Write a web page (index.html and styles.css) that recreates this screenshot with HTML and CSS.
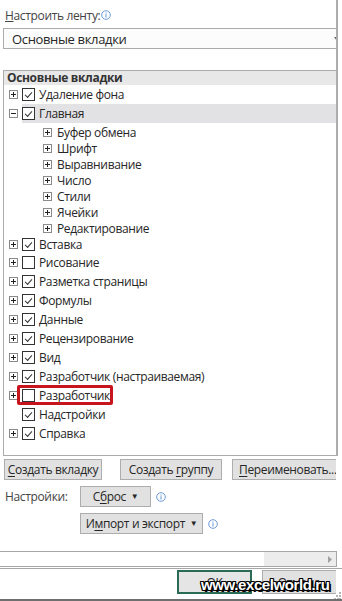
FILE: index.html
```html
<!DOCTYPE html>
<html lang="ru">
<head>
  <meta charset="UTF-8" />
  <meta name="viewport" content="width=device-width, initial-scale=1.0"/>
  <title>Настроить ленту</title>
  <link rel="stylesheet" href="styles.css">
</head>
<body>

  <div class="dlg">
    <div class="top">
      <div class="caption"><span><u>Н</u>астроить ленту:</span>
        <svg class="info" width="10" height="10" viewBox="0 0 10 10"><circle cx="5" cy="5" r="4.3" fill="none" stroke="#5b8fd1" stroke-width="0.9"/><rect x="4.5" y="4.2" width="1" height="3.3" fill="#5b8fd1"/><rect x="4.5" y="2.5" width="1" height="1" fill="#5b8fd1"/></svg>
      </div>
      <div class="combo">
        <span>Основные вкладки</span>
        <svg class="combo-arrow" width="6" height="4" viewBox="0 0 6 4"><path d="M0 0h6L3 4z" fill="#666"/></svg>
      </div>

      <div class="tree">
        <div class="tree-head">Основные вкладки</div>

        <div class="row"><i class="tog plus"></i><i class="chk on"></i><span>Удаление фона</span></div>
        <div class="row"><i class="tog minus"></i><span class="sel"><i class="chk on"></i><span>Главная</span></span></div>
        <div class="sub">
          <div class="row small"><i class="tog plus"></i><span>Буфер обмена</span></div>
          <div class="row small"><i class="tog plus"></i><span>Шрифт</span></div>
          <div class="row small"><i class="tog plus"></i><span>Выравнивание</span></div>
          <div class="row small"><i class="tog plus"></i><span>Число</span></div>
          <div class="row small"><i class="tog plus"></i><span>Стили</span></div>
          <div class="row small"><i class="tog plus"></i><span>Ячейки</span></div>
          <div class="row small"><i class="tog plus"></i><span>Редактирование</span></div>
        </div>
        <div class="row short"><i class="tog plus"></i><i class="chk on"></i><span>Вставка</span></div>
        <div class="row"><i class="tog plus"></i><i class="chk"></i><span>Рисование</span></div>
        <div class="row"><i class="tog plus"></i><i class="chk on"></i><span>Разметка страницы</span></div>
        <div class="row"><i class="tog plus"></i><i class="chk on"></i><span>Формулы</span></div>
        <div class="row"><i class="tog plus"></i><i class="chk on"></i><span>Данные</span></div>
        <div class="row"><i class="tog plus"></i><i class="chk on"></i><span>Рецензирование</span></div>
        <div class="row"><i class="tog plus"></i><i class="chk on"></i><span>Вид</span></div>
        <div class="row"><i class="tog plus"></i><i class="chk on"></i><span>Разработчик (настраиваемая)</span></div>
        <div class="row marked"><i class="tog plus"></i><i class="chk"></i><span>Разработчик</span><b class="mark"></b></div>
        <div class="row"><i class="tog"></i><i class="chk on"></i><span>Надстройки</span></div>
        <div class="row"><i class="tog plus"></i><i class="chk on"></i><span>Справка</span></div>
      </div>
    </div>

    <div class="actions">
      <div class="btn-row">
        <button class="btn b-tab"><u>С</u>оздать вкладку</button>
        <button class="btn b-group">Создать <u>г</u>руппу</button>
        <button class="btn b-ren"><u>П</u>ереименовать...</button>
      </div>
      <div class="opt-row">
        <span class="opt-label">Настройки:</span>
        <button class="btn b-reset">С<u>б</u>рос <span class="tri">▼</span></button>
        <svg class="info" width="10" height="10" viewBox="0 0 10 10"><circle cx="5" cy="5" r="4.3" fill="none" stroke="#5b8fd1" stroke-width="0.9"/><rect x="4.5" y="4.2" width="1" height="3.3" fill="#5b8fd1"/><rect x="4.5" y="2.5" width="1" height="1" fill="#5b8fd1"/></svg>
      </div>
      <div class="opt-row">
        <span class="opt-label"></span>
        <button class="btn b-import">И<u>м</u>порт и экспорт <span class="tri">▼</span></button>
        <svg class="info" width="10" height="10" viewBox="0 0 10 10"><circle cx="5" cy="5" r="4.3" fill="none" stroke="#5b8fd1" stroke-width="0.9"/><rect x="4.5" y="4.2" width="1" height="3.3" fill="#5b8fd1"/><rect x="4.5" y="2.5" width="1" height="1" fill="#5b8fd1"/></svg>
      </div>
    </div>

    <div class="hscroll">
      <div class="thumb"></div>
      <div class="track"></div>
      <div class="arrow"><svg width="4" height="7" viewBox="0 0 4 7"><path d="M0 0l4 3.5L0 7z" fill="#a0a0a0"/></svg></div>
    </div>

    <div class="footer">
      <button class="btn b-ok">ОК</button>
      <div class="cancel-clip"><button class="btn b-cancel">Отмена</button></div>
      <svg class="grip" width="7" height="8" viewBox="0 0 7 8"><g fill="#b5b5b5"><rect x="5" y="0" width="2" height="2"/><rect x="2" y="3" width="2" height="2"/><rect x="5" y="3" width="2" height="2"/><rect x="0" y="6" width="2" height="2"/><rect x="3" y="6" width="2" height="2"/><rect x="5" y="6" width="2" height="2"/></g></svg>
    </div>

    <div class="watermark">www.excelworld.ru</div>
  </div>

</body>
</html>
```

FILE: styles.css
```css
body {
  margin: 0;
  background: #fff;
  font-family: "Open Sans", "Noto Sans", sans-serif;
  font-size: 12px;
  letter-spacing: -0.35px;
  color: #262626;
}

.dlg {
  position: relative;
  width: 342px;
  height: 599px;
  border-bottom: 2px solid #6f6f6f;
  overflow: hidden;
}

.top {
  width: 336px;
  border-right: 2px solid #acacac;
  overflow: hidden;
}

.caption {
  display: flex;
  align-items: center;
  height: 28px;
  padding-left: 5px;
  color: #444;
  box-sizing: border-box;
  padding-top: 2px;
}

.caption u {
  text-decoration-thickness: 1px;
}

.info {
  display: block;
  margin-left: 1px;
  flex: none;
}

.combo {
  display: flex;
  align-items: center;
  justify-content: space-between;
  margin-left: 3px;
  width: 340px;
  height: 21px;
  box-sizing: border-box;
  border: 1px solid #ababab;
  background: #fcfcfc;
  padding: 0 0 0 8px;
  font-size: 13px;
}

.combo-arrow {
  margin-right: 2px;
}

.tree {
  margin: 21px 0 0 3px;
  height: 384px;
  border: 1px solid #ababab;
  border-right: none;
}

.tree-head {
  height: 14px;
  line-height: 14px;
  background: #e8e8e8;
  padding-left: 3px;
  font-weight: 700;
  color: #333;
}

.row {
  position: relative;
  display: flex;
  align-items: center;
  height: 19px;
  padding-left: 5px;
  white-space: nowrap;
}

.row.short {
  height: 17px;
}

.sub .row {
  height: 16px;
  padding-left: 39px;
}

.sub {
  padding-top: 1px;
}

.tog {
  display: block;
  flex: none;
  width: 9px;
  height: 9px;
  margin-right: 4px;
  box-sizing: border-box;
  position: relative;
}

.tog.plus,
.tog.minus {
  border: 1px solid #8a8a8a;
  background: #fff;
}

.tog.plus::before,
.tog.minus::before {
  content: "";
  position: absolute;
  left: 1px;
  top: 3px;
  width: 5px;
  height: 1px;
  background: #222;
}

.tog.plus::after {
  content: "";
  position: absolute;
  left: 3px;
  top: 1px;
  width: 1px;
  height: 5px;
  background: #222;
}

.sub .tog {
  margin-right: 5px;
}

.chk {
  display: block;
  flex: none;
  width: 13px;
  height: 13px;
  margin-right: 4px;
  box-sizing: border-box;
  border: 1px solid #333;
  background: #fff;
  position: relative;
}

.chk.on::after {
  content: "";
  position: absolute;
  left: 2px;
  top: 1px;
  width: 6px;
  height: 3px;
  border-left: 1px solid #333;
  border-bottom: 1px solid #333;
  transform: translate(0, 2px) rotate(-48deg);
  transform-origin: 50% 50%;
}

.sel {
  display: flex;
  align-items: center;
  flex: 1;
  height: 19px;
  background: #e2e2e4;
}

.mark {
  position: absolute;
  left: 13px;
  top: -1px;
  width: 96px;
  height: 20px;
  box-sizing: border-box;
  border: 3px solid #c8141c;
  border-radius: 2px;
}

.actions {
  width: 336px;
  overflow: hidden;
  padding-top: 3px;
}

.btn {
  font-family: inherit;
  font-size: 12px;
  letter-spacing: -0.35px;
  color: #262626;
  background: #e1e1e1;
  border: 1px solid #adadad;
  height: 21px;
  padding: 0;
  margin: 0;
  white-space: nowrap;
  flex: none;
}

.btn u {
  text-decoration-thickness: 1px;
  text-underline-offset: 2px;
}

.btn-row {
  display: flex;
  padding-left: 4px;
}

.b-tab {
  width: 98px;
}

.b-group {
  width: 102px;
  margin-left: 18px;
}

.b-ren {
  width: 110px;
  margin-left: 10px;
  text-align: left;
  padding-left: 6px;
}

.opt-row {
  display: flex;
  align-items: center;
  margin-top: 6px;
}

.opt-label {
  width: 80px;
  padding-left: 5px;
  box-sizing: border-box;
  color: #444;
  flex: none;
}

.opt-row .info {
  margin-left: 5px;
}

.b-reset {
  width: 71px;
}

.b-import {
  width: 123px;
}

.tri {
  font-size: 8px;
  vertical-align: 2px;
  margin-left: 2px;
}

.hscroll {
  display: flex;
  width: 336px;
  height: 14px;
  margin-top: 17px;
  border-top: 1px solid #a7a7a7;
  border-bottom: 1px solid #a7a7a7;
  border-right: 1px solid #a7a7a7;
}

.thumb {
  width: 264px;
  background: #fff;
}

.track {
  flex: 1;
  background: #ececec;
}

.arrow {
  width: 13px;
  background: #ececec;
  display: flex;
  align-items: center;
  justify-content: center;
}

.footer {
  display: flex;
  align-items: flex-start;
  border-top: 1px solid #a7a7a7;
  margin-top: 1px;
  height: 31px;
  padding-left: 177px;
}

.b-ok {
  width: 75px;
  height: 24px;
  margin-top: 1px;
  border: 2px solid #2a6b53;
  background: #e5e5e5;
}

.cancel-clip {
  width: 74px;
  margin-left: 10px;
  margin-top: 1px;
  overflow: hidden;
  flex: none;
}

.b-cancel {
  width: 80px;
  height: 24px;
  padding-right: 6px;
}

.grip {
  margin-top: 23px;
  margin-left: -2px;
}

.watermark {
  position: absolute;
  left: 201px;
  top: 576px;
  font-family: "Liberation Sans", Arial, sans-serif;
  font-weight: 700;
  font-size: 15px;
  letter-spacing: -0.4px;
  color: #fff;
  text-shadow: -1px -1px 0 #000, 1px -1px 0 #000, -1px 1px 0 #000, 1px 1px 0 #000,
    0 -1px 0 #000, 0 1px 0 #000, -1px 0 0 #000, 1px 0 0 #000, 2px 2px 0 #000;
}
```
